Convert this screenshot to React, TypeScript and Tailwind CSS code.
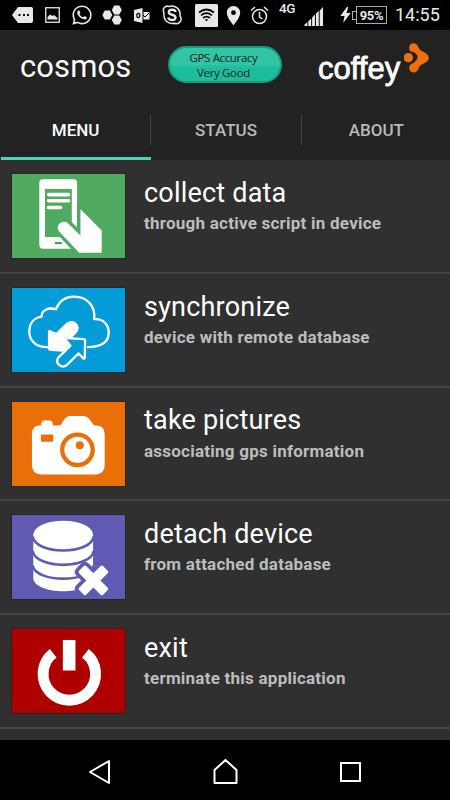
import React from 'react';
import { FaWhatsapp } from 'react-icons/fa';
import { MdLocationOn } from 'react-icons/md';

interface MenuItem {
  title: string;
  subtitle: string;
  color: string;
  icon: React.ReactNode;
}

const CollectIcon = () => (
  <svg viewBox="0 0 340 253" className="w-full h-full">
    <rect x="82" y="16" width="114" height="209" rx="11" fill="#fff" />
    <rect x="99" y="45" width="81" height="145" fill="#50aa5f" />
    <path d="M110 62H170M110 80.500H170M110 101H146" stroke="#fff" strokeWidth="11" strokeLinecap="round" />
    <path d="M129 208H150" stroke="#2fa24a" strokeWidth="6" />
    <path
      d="M206 106L270 170V237H202L142 173C128 158 148 136 166 146L206 185Z"
      fill="#fff"
      stroke="#50aa5f"
      strokeWidth="20"
      paintOrder="stroke"
    />
  </svg>
);

const SyncIcon = () => (
  <svg viewBox="0 0 340 253" className="w-full h-full" strokeLinejoin="round">
    <path
      d="M108 178C74 179 52 160 52 132C52 105 67 89 89 86C89 67 107 57 132 64C142 40 162 26 187 26C228 26 252 57 247 94C274 91 291 110 291 135C291 163 270 178 226 178"
      fill="none"
      stroke="#fff"
      strokeWidth="7"
    />
    <path
      d="M113 129L134 138L166 107C184 92 208 114 193 133L166 160L173 190L116 187C109 187 111 181 111 176V131Z"
      fill="#fff"
      stroke="#fff"
      strokeWidth="6"
    />
    <path
      d="M167 151L216 154Q220 154 220 159L219 210Q218 215 213 211L200 197L165 232C149 244 127 226 140 209L176 174L165 161Q160 151 167 151Z"
      fill="#049cd8"
      stroke="#fff"
      strokeWidth="7"
    />
  </svg>
);

const CameraIcon = () => (
  <svg viewBox="0 0 340 253" className="w-full h-full">
    <path
      d="M83 71H88C88 60 91 56 99 56H113C121 56 123 62 123 71H143C151 71 154 43 174 42H214C237 42 240 71 250 71H253Q279 71 279 97V190Q279 218 251 218H88Q60 218 60 190V98Q60 71 83 71Z"
      fill="#fff"
    />
    <rect x="87" y="98" width="37" height="22" rx="3" fill="#eb6f08" />
    <circle cx="197" cy="144" r="46" fill="none" stroke="#eb6f08" strokeWidth="13" />
    <circle cx="204" cy="130" r="12" fill="#eb6f08" />
  </svg>
);

const DetachIcon = () => (
  <svg viewBox="0 0 340 253" className="w-full h-full">
    <path d="M64 60V192C72 242 236 242 244 192V60Z" fill="#fff" />
    <ellipse cx="154" cy="60" rx="90" ry="43" fill="#fff" />
    <path
      d="M62 65C71 121 237 121 246 65M62 108C71 164 237 164 246 108M62 152C71 205 237 205 246 152"
      fill="none"
      stroke="#5f5bb2"
      strokeWidth="8"
    />
    <g transform="translate(245 197) rotate(45)" fill="#fff" stroke="#5f5bb2" strokeWidth="22" strokeLinejoin="round">
      <path
        d="M-10 -51H10Q15 -51 15 -46V-15H46Q51 -15 51 -10V10Q51 15 46 15H15V46Q15 51 10 51H-10Q-15 51 -15 46V15H-46Q-51 15 -51 10V-10Q-51 -15 -46 -15H-15V-46Q-15 -51 -10 -51Z"
        paintOrder="stroke"
      />
    </g>
  </svg>
);

const ExitIcon = () => (
  <svg viewBox="0 0 340 253" className="w-full h-full">
    <path d="M124 73A79 79 0 1 0 221 73" fill="none" stroke="#fff" strokeWidth="33" />
    <rect x="153" y="33" width="38" height="92" fill="#fff" />
  </svg>
);

const MENU_ITEMS: MenuItem[] = [
  { title: 'collect data', subtitle: 'through active script in device', color: 'bg-[#50aa5f]', icon: <CollectIcon /> },
  { title: 'synchronize', subtitle: 'device with remote database', color: 'bg-[#049cd8]', icon: <SyncIcon /> },
  { title: 'take pictures', subtitle: 'associating gps information', color: 'bg-[#eb6f08]', icon: <CameraIcon /> },
  { title: 'detach device', subtitle: 'from attached database', color: 'bg-[#5f5bb2]', icon: <DetachIcon /> },
  { title: 'exit', subtitle: 'terminate this application', color: 'bg-[#af0000]', icon: <ExitIcon /> }
];

const StatusBar = () => (
  <div className="h-[30px] shrink-0 bg-black text-[#e8e8e8] flex items-center pl-[7px]">
    <div className="grid grid-cols-6 w-[180px] justify-items-center items-center">
      <svg width="21" height="16" viewBox="0 0 21 16">
        <path d="M6 0H19Q21 0 21 2V14Q21 16 19 16H6L0 8Z" fill="currentColor" />
        <path d="M6.500 7h2v2h-2zM11 7h2v2h-2zM15 7h2v2h-2z" fill="#000" />
      </svg>
      <svg width="15" height="16" viewBox="0 0 15 16">
        <rect x=".75" y=".75" width="13.500" height="14.500" fill="none" stroke="currentColor" strokeWidth="1.300" />
        <path d="M2.500 12.500V10L5 7.500L7.500 9L9 8L12.500 11V12.500Z" fill="currentColor" />
      </svg>
      <FaWhatsapp size={22} />
      <svg width="20" height="20" viewBox="0 0 20 20" fill="currentColor">
        <path d="M2.800 5.500H7.800L10.300 10L7.800 14.500H2.800L.3 10ZM12.300 .5H17.300L19.800 5L17.300 9.600H12.300L9.800 5ZM12.300 10.400H17.300L19.800 15L17.300 19.500H12.300L9.800 15Z" />
      </svg>
      <svg width="16" height="15" viewBox="0 0 16 15">
        <path d="M0 2L8.500 0V15L0 13Z" fill="currentColor" />
        <ellipse cx="4.300" cy="7.500" rx="1.500" ry="2.200" fill="none" stroke="#000" strokeWidth="1.200" />
        <path d="M9.500 4H15.500V11.500H9.500" fill="currentColor" />
        <path d="M9 7L11 9L15.500 4.500" fill="none" stroke="#000" />
      </svg>
      <svg width="20" height="20" viewBox="0 0 20 20">
        <path
          d="M2 8C0 4 3 0 7 1.500C13-.5 19 4 18 11C21 15 17 20 12.500 18.200C6 19.500 1 15 2 8Z"
          fill="none"
          stroke="currentColor"
          strokeWidth="1.500"
        />
        <path d="M13.600 7C13 3.800 6.800 4 6.800 7.200C6.800 10.500 13.500 9 13.500 12.500C13.500 16 7 15.800 6.300 12.500" fill="none" stroke="currentColor" strokeWidth="2.400" />
      </svg>
    </div>
    <svg className="ml-2" width="23" height="23" viewBox="0 0 23 23">
      <rect width="23" height="23" rx="1.500" fill="currentColor" />
      <g fill="none" stroke="#000" strokeWidth="1.700">
        <path d="M4 8.500Q11.500 2.500 19 8.500M6 11.300Q11.500 7 17 11.300M8 14Q11.500 11.200 15 14" />
        <path d="M9.800 15.300L11.500 17.500L13.200 15.300Z" fill="#000" stroke="none" />
      </g>
    </svg>
    <MdLocationOn size={23} className="ml-[4px] -mr-[3px]" />
    <svg className="ml-[8px]" width="19" height="19" viewBox="0 0 19 19" fill="none" stroke="currentColor" strokeWidth="1.500">
      <circle cx="9.500" cy="10.500" r="7" />
      <path d="M1 4.500L5 1M14 1L18 4.500M9.500 6V11L12.500 13" />
    </svg>
    <span className="ml-[10px] mb-[12px] w-[17px] text-[13.500px] leading-none font-medium tracking-tight">4G</span>
    <svg className="ml-[8px] mt-[2px]" width="20" height="19" viewBox="0 0 20 20" fill="currentColor">
      <path d="M0 20V18.500L3 16V20ZM4 20V15L7 12V20ZM8 20V11L11 8V20ZM12 20V7L15 4V20ZM16 20V4L19.500 0V20Z" />
    </svg>
    <svg className="ml-[16px]" width="11" height="16" viewBox="0 0 11 17" fill="currentColor">
      <path d="M7 0L0 9.500H4.500L3 17L11 6.500H6.500L8.500 0Z" />
    </svg>
    <div className="ml-[1px] w-1 h-[9px] border border-r-0 border-[#aaa]" />
    <div className="w-[31px] h-[18px] border border-[#aaa] flex items-center justify-center text-[13px] leading-none font-bold tracking-tight">
      95%
    </div>
    <span className="ml-[8px] text-[18px] leading-none whitespace-nowrap">14:55</span>
  </div>
);

const Header = () => (
  <header className="h-[70px] shrink-0 flex items-start pl-5">
    <h1 className="w-[148px] pt-[18px] text-[31px] leading-[37px] tracking-[0.1px]">cosmos</h1>
    <div className="mt-4 w-[114px] h-[37px] rounded-full border-2 border-[#159b80] bg-linear-to-b from-[#31c4a5] from-50% to-[#1bbd9c] to-60% text-[#04251e] font-['Open_Sans'] font-medium text-[11.500px] leading-[15px] text-center flex flex-col justify-center pr-[3px] tracking-[-0.35px]">
      <span>GPS Accuracy</span>
      <span>Very Good</span>
    </div>
    <div className="ml-9 mt-[21px] flex items-start">
      <span className="w-[84px] font-['Liberation_Sans'] text-[31px] leading-[35px] [-webkit-text-stroke:0.8px_white]">coffey</span>
      <svg className="ml-[2px] -mt-[8px]" width="25" height="30" viewBox="0 0 75 90" fill="#ed700b">
        <path d="M22 2C32-2 41 4 45 16C49 26 60 25 68 33C77 42 76 50 68 56C58 64 48 63 44 76C40 90 26 92 18 83C12 74 18 64 24 60V31C14 24 12 7 22 2Z" />
        <path d="M9 26C26 21 42 33 41 43C40 54 26 64 12 66Z" fill="#222222" />
        <circle cx="13" cy="44" r="14" />
      </svg>
    </div>
  </header>
);

const Tabs = () => (
  <nav className="h-[60px] shrink-0 grid grid-cols-3 text-[17px] font-medium text-[#b9b9b9] pl-px -mr-[2px]">
    <button className="relative border-b-3 border-[#4bd5b9] text-white pt-1 pr-px">
      MENU
      <span className="absolute right-0 top-[15px] h-[30px] w-px bg-[#444]" />
    </button>
    <button className="relative border-b-3 border-transparent pt-1 pr-px">
      STATUS
      <span className="absolute right-0 top-[15px] h-[30px] w-px bg-[#444]" />
    </button>
    <button className="border-b-3 border-transparent pt-1 pr-px">ABOUT</button>
  </nav>
);

const App: React.FC = () => {
  return (
    <div className="w-[450px] h-[800px] bg-[#222222] text-white font-['Roboto',sans-serif] flex flex-col overflow-hidden">
      <StatusBar />
      <Header />
      <Tabs />

      {/* Menu list */}
      <main className="flex-1 bg-[#303030]">
        {MENU_ITEMS.map((item) => (
          <div key={item.title} className="h-[113.8px] border-b-2 border-[#444] flex pt-[14px] pl-3">
            <div className={`w-[113px] h-[84px] shrink-0 outline outline-[#262626] ${item.color}`}>{item.icon}</div>
            <div className="ml-[19px]">
              <h2 className="pt-[0.8px] text-[27px] leading-[36px] tracking-[0.2px]">{item.title}</h2>
              <p className="-mt-[0.8px] text-[17px] leading-[26px] font-bold tracking-[0.24px] text-[#bdbdbd]">{item.subtitle}</p>
            </div>
          </div>
        ))}
      </main>

      {/* Navigation keys */}
      <div className="h-[60px] shrink-0 bg-black flex items-center justify-between pl-[88px] pr-[89px] pt-[3px]">
        <svg width="23" height="26" viewBox="0 0 23 26" fill="none" stroke="#fff" strokeWidth="2" strokeLinejoin="round">
          <path d="M21 2V24L2 13Z" />
        </svg>
        <svg width="25" height="26" viewBox="0 0 25 26" fill="none" stroke="#fff" strokeWidth="2" strokeLinejoin="round">
          <path d="M1.500 24V11L12.500 1L23.500 11V24Z" />
        </svg>
        <div className="w-[21px] h-5 border-2 border-white" />
      </div>
    </div>
  );
};

export default App;
